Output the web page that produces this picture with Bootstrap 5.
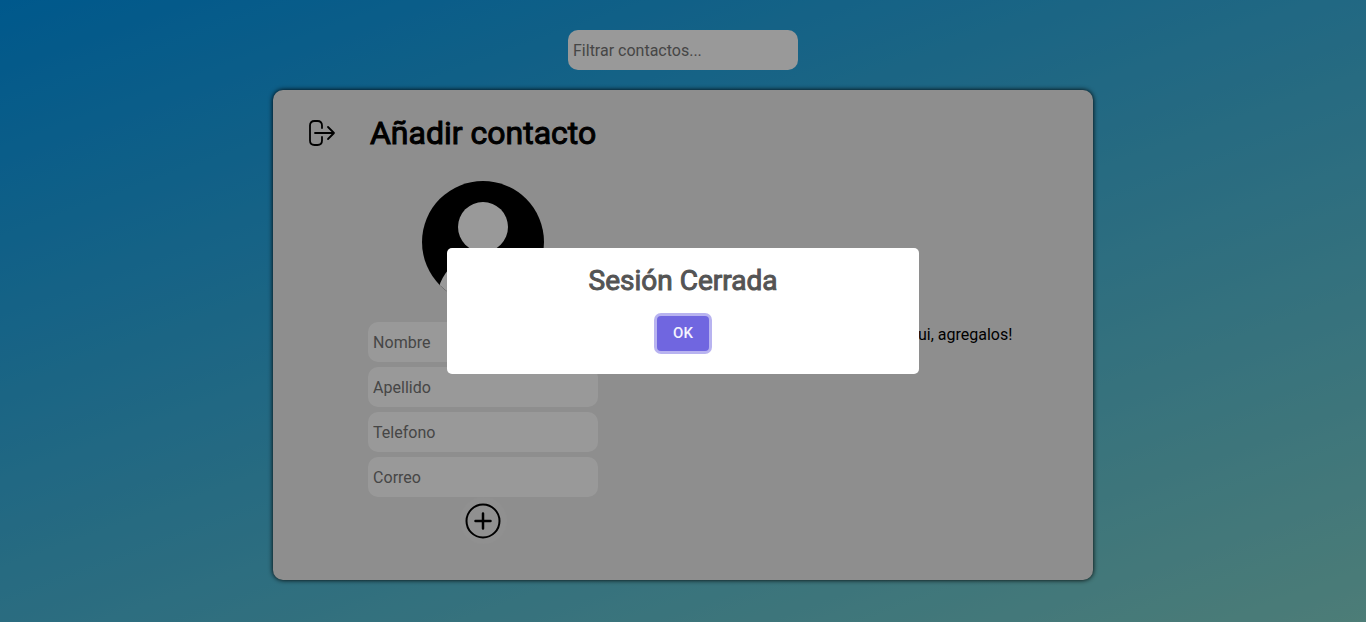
<!DOCTYPE html>
<html lang="es">
<head>
<meta charset="utf-8">
<meta name="viewport" content="width=device-width, initial-scale=1">
<title>Contactos</title>
<link href="https://cdn.jsdelivr.net/npm/bootstrap@5.3.0/dist/css/bootstrap.min.css" rel="stylesheet">
<style>
body{font-family:Roboto,sans-serif;color:#000;background:linear-gradient(160deg,#0093e9,#80d0c7) fixed}
.field{width:230px;height:40px;padding:0 5px;border:0;border-radius:10px;background:#fff;color:#000;line-height:24px}
.field::placeholder{color:#757575;opacity:1}
.field + .field{margin-top:5px}
.filter-bar{padding:30px 0 20px}
.panel{width:60%;min-width:600px;padding:10px;border-radius:10px;background:#ededed;box-shadow:0 0 5px #000}
.panel-body{min-height:470px}
.heading-row{display:grid;grid-template-columns:1fr auto 1fr;height:66px}
.panel-title{font-size:32px;line-height:38px;font-weight:400;-webkit-text-stroke:1px currentColor}
.logout{margin-right:10px}
.add-btn{width:47px;height:47px;border:0;border-radius:50%;background:#f0f0f0}
.avatar{margin:15px 0 19px}
.overlay{background:rgba(0,0,0,.4)}
.dialog{width:472px;max-width:100%;padding:15px 20px 23px;border-radius:5px;background:#fff}
.dialog-title{margin-bottom:17px;font-size:28px;line-height:36px;font-weight:400;color:#545454;-webkit-text-stroke:1px currentColor}
.ok-btn{display:block;width:52px;height:35px;border:0;border-radius:4px;background:#7066e0;color:#f4f3fd;font-size:15px;font-weight:500;box-shadow:0 0 0 3px #b8b3f0}
</style>
<script src="https://cdn.jsdelivr.net/npm/bootstrap@5.3.0/dist/js/bootstrap.bundle.min.js"></script>
</head>
<body class="min-vh-100">
<main class="d-flex flex-column align-items-center">
  <div class="filter-bar d-flex">
    <input class="field" type="search" placeholder="Filtrar contactos..." aria-label="Filtrar contactos">
  </div>
  <section class="panel">
    <div class="panel-body row g-0">
      <div class="col-6">
        <div class="heading-row align-items-center">
          <button class="logout btn p-0 border-0 d-flex justify-content-center" type="button" aria-label="Cerrar sesión">
            <svg width="28" height="28" viewBox="0 0 28 28" fill="none" stroke="#000" stroke-width="1.800" stroke-linecap="round" stroke-linejoin="round"><path d="M14 9V6.500Q14 2 9.500 2H6.500Q2 2 2 6.500V21.500Q2 26 6.500 26H9.500Q14 26 14 21.500V18M7 14H26M20 8L26 14L20 20"/></svg>
          </button>
          <h1 class="panel-title m-0">Añadir contacto</h1>
        </div>
        <form class="d-flex flex-column align-items-center">
          <svg class="avatar" width="122" height="122" viewBox="0 0 122 122" aria-hidden="true"><defs><clipPath id="disc"><circle cx="61" cy="61" r="61"/></clipPath></defs><g clip-path="url(#disc)"><path d="M0 0H122V122H0Z"/><circle cx="61" cy="46" r="25" fill="#fff"/><circle cx="61" cy="119" r="46" fill="#fff"/></g></svg>
          <input class="field" placeholder="Nombre" aria-label="Nombre">
          <input class="field" placeholder="Apellido" aria-label="Apellido">
          <input class="field" type="tel" placeholder="Telefono" aria-label="Telefono">
          <input class="field" type="email" placeholder="Correo" aria-label="Correo">
          <button class="add-btn p-0 d-flex align-items-center justify-content-center" type="button" aria-label="Añadir">
            <svg width="36" height="36" viewBox="0 0 36 36" fill="none" stroke="#000" stroke-width="2"><circle cx="18" cy="18" r="16.500"/><path d="M18 10.500V25.500M10.500 18H25.500" stroke-width="2.500" stroke-linecap="round"/></svg>
          </button>
        </form>
      </div>
      <div class="col-6 d-flex align-items-center justify-content-center">
        <p class="m-0">No tienes contactos aqui, agregalos!</p>
      </div>
    </div>
  </section>
</main>
<div class="overlay position-fixed top-0 start-0 w-100 h-100 d-flex align-items-center justify-content-center">
  <div class="dialog text-center" role="dialog" aria-modal="true" aria-labelledby="dialog-title">
    <h2 class="dialog-title mt-0" id="dialog-title">Sesión Cerrada</h2>
    <button class="ok-btn mx-auto" type="button">OK</button>
  </div>
</div>
</body>
</html>
